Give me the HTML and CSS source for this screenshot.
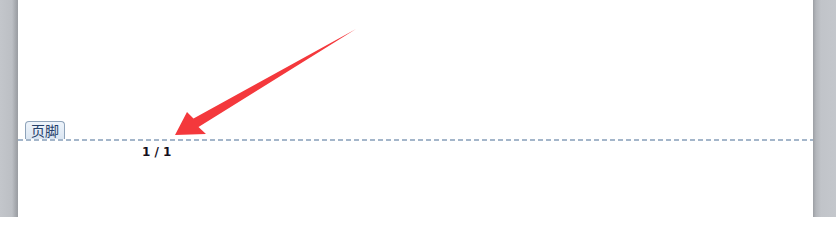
FILE: index.html
```html
<!DOCTYPE html>
<html lang="zh">
<head>
<meta charset="utf-8">
<title>页脚</title>
<link rel="stylesheet" href="styles.css">
</head>
<body>
<div class="workspace">
  <div class="band band-left"></div>
  <div class="page">
    <div class="footer-head">
      <div class="footer-tab">页脚</div>
    </div>
    <div class="footer-line"></div>
    <div class="page-number">1 / 1</div>
  </div>
  <div class="band band-right"></div>
  <svg class="arrow" viewBox="0 0 836 217" width="836" height="217" aria-hidden="true">
    <polygon points="175,135 187,112 193.5,118.5 356,29 198.5,127 206,134" fill="#f4383c"/>
  </svg>
</div>
</body>
</html>
```
FILE: styles.css
```css
html, body {
  margin: 0;
  padding: 0;
  background: #ffffff;
}
.workspace {
  position: relative;
  display: flex;
  width: 836px;
  height: 217px;
  overflow: hidden;
}
.band {
  flex: none;
}
.band-left {
  width: 18px;
  background: linear-gradient(to right, #c3c6cb 0, #bcbfc4 12px, #a3a6ab 16px, #9a9da2 18px);
}
.band-right {
  width: 23px;
  background: linear-gradient(to right, #9c9fa4 0, #b3b6bb 3px, #c1c4c9 8px, #c4c7cc 23px);
}
.page {
  flex: 1;
  background: #ffffff;
  padding-top: 121px;
  display: flex;
  flex-direction: column;
}
.footer-head {
  display: flex;
  padding-left: 7px;
}
.footer-tab {
  box-sizing: border-box;
  width: 40px;
  height: 18px;
  border: 1px solid #8ea3ba;
  border-bottom: none;
  border-radius: 4px 4px 0 0;
  background: linear-gradient(to bottom, #eef4fb 0, #dbe6f2 100%);
  color: #24406a;
  font-family: "Noto Sans CJK SC", sans-serif;
  font-size: 14px;
  line-height: 17px;
  text-align: center;
}
.footer-line {
  height: 2px;
  background: repeating-linear-gradient(to right, #a4b6ca 0, #a4b6ca 5px, transparent 5px, transparent 8px);
}
.page-number {
  margin-top: 5px;
  padding-left: 124px;
  font-family: "DejaVu Sans", sans-serif;
  font-weight: bold;
  font-size: 12px;
  line-height: 12px;
  color: #150f1c;
}
.arrow {
  position: absolute;
  left: 0;
  top: 0;
  pointer-events: none;
}
```
